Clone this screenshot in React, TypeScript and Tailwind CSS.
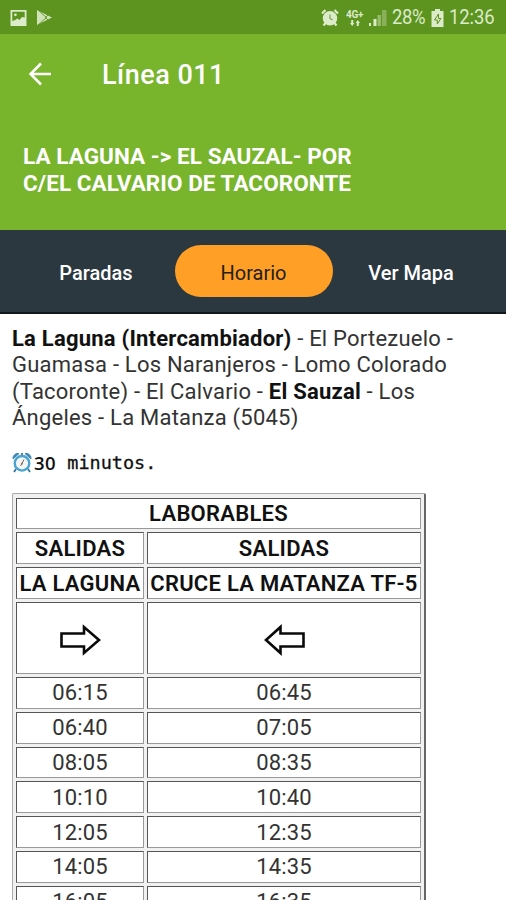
import clsx from "clsx";

/* TIMETABLE DATA */
const times = [
  ["06:15", "06:45"],
  ["06:40", "07:05"],
  ["08:05", "08:35"],
  ["10:10", "10:40"],
  ["12:05", "12:35"],
  ["14:05", "14:35"],
  ["16:05", "16:35"],
];

function StatusBar() {
  return (
    <div className="flex h-[34px] shrink-0 items-center bg-[#5d931f] pl-2.5 pr-[10px] pt-px text-[#dcebc9]">

      {/* NOTIFICATIONS */}
      <svg width="17" height="16" viewBox="0 0 17 16">
        <path
          fillRule="evenodd"
          fill="currentColor"
          d="M.5 0h16v16H.5zM2.300 1.800v9.200l3-1 2-1.500 2.200 1.500 2.500-3 2.700.5V1.800z"
        />
        <circle cx="5.400" cy="4.800" r="1.400" fill="currentColor" />
      </svg>
      <svg width="17" height="17" viewBox="0 0 17 17" className="ml-[9px]">
        <path d="M1 1v15L16 8.500z" fill="currentColor" opacity=".9" />
        <path d="M2 1l8.500 7.500L2 16M12.500 5.500l-3 3 3 3" fill="none" stroke="#5d931f" strokeWidth=".9" />
      </svg>

      {/* SYSTEM ICONS */}
      <div className="ml-auto flex items-center">
        <svg width="18" height="18" viewBox="0 0 18 18">
          <circle cx="9" cy="9.300" r="7.200" fill="currentColor" />
          <path d="M1 4.500L4.500 1M17 4.500L13.500 1M4.500 14l-2 2.500M13.500 14l2 2.500" stroke="currentColor" strokeWidth="2.200" />
          <path d="M9 5.500v4l2.600 1.600" fill="none" stroke="#7da653" strokeWidth="1.200" />
        </svg>
        <div className="ml-[7px] flex w-[17px] flex-col items-center">
          <span className="font-[Roboto] text-[10px] leading-[9px] font-bold tracking-[-0.3px]">4G+</span>
          <svg width="10" height="6" viewBox="0 0 10 6" className="mt-px">
            <path d="M0 3l2.200 3L4.400 3H3.200V0H1.200v3zM5.600 3l2.200-3L10 3H8.800v3H6.800V3z" fill="currentColor" />
          </svg>
        </div>
        <svg width="18" height="17" viewBox="0 0 18 17" className="ml-1.5">
          <path d="M0 14h2v3H0zM4.500 10h3v7h-3z" fill="currentColor" />
          <path d="M8.500 6H12v11H8.500z" fill="currentColor" opacity=".45" />
          <path d="M13 1h4.500v16H13z" fill="currentColor" opacity=".35" />
        </svg>
        <span className="ml-[5px] w-[35px] origin-left scale-y-110 font-[Roboto] text-[18.500px] leading-none tracking-[-0.4px]">28%</span>
        <svg width="13" height="18" viewBox="0 0 13 18" className="ml-1">
          <path d="M4 0h5v2h3.500v16H.5V2H4z" fill="currentColor" />
          <path d="M7.500 5L3.500 11h2.800v4l3.600-5.500H7.500z" fill="none" stroke="#5d931f" />
        </svg>
        <span className="ml-[5px] w-[47px] origin-left scale-y-110 font-[Roboto] text-[18.500px] leading-none tracking-[-0.1px]">12:36</span>
      </div>
    </div>
  );
}

function AlarmIcon() {
  return (
    <svg width="20" height="21" viewBox="0 0 20 21">
      <path d="M1 7a5 5 0 0 1 6-5.500zM19 7a5 5 0 0 0-6-5.500z" fill="#3a86b4" stroke="#3a86b4" />
      <path d="M4 17l-2 3M16 17l2 3M10 1v3" stroke="#34769b" strokeWidth="1.800" />
      <circle cx="10" cy="11.300" r="7.300" fill="#f4f6f6" stroke="#4ba3d0" strokeWidth="2.400" />
      <path d="M10 11.500l2-4M10 11.500l-1.500 2.300" stroke="#666" />
      <circle cx="9.800" cy="11.800" r="1" fill="#a36b4a" />
    </svg>
  );
}

function ArrowRight() {
  return (
    <svg width="42" height="32" viewBox="0 0 42 32">
      <path d="M2.500 9.500H25V3L40 16 25 29V22.500H2.500z" fill="#fff" stroke="#0a0a0a" strokeWidth="2.600" />
    </svg>
  );
}

function ArrowLeft() {
  return (
    <svg width="42" height="32" viewBox="0 0 42 32">
      <path d="M40.500 9.500H17.500V3L3 16 17.500 29V22.500H40.500z" fill="#fff" stroke="#0a0a0a" strokeWidth="2.600" />
    </svg>
  );
}

function Cell({ children, className }: { children: React.ReactNode; className?: string }) {
  return (
    <div
      className={clsx(
        "flex items-center justify-center border border-t-[#555] border-l-[#555] border-r-[#999] border-b-[#999] bg-white whitespace-nowrap",
        className
      )}
    >
      {children}
    </div>
  );
}

export default function App() {
  return (
    <div className="flex h-[900px] w-[506px] flex-col overflow-hidden bg-white font-[Roboto,sans-serif]">

      <StatusBar />

      {/* HEADER */}
      <header className="h-[196px] shrink-0 bg-[#78b52c] text-white">
        <div className="flex h-20 items-center pl-7">
          <svg width="24" height="24" viewBox="0 0 24 24" fill="none" stroke="currentColor" strokeWidth="2.500">
            <path d="M23 12H2.500M13 1.500L2.500 12 13 22.500" />
          </svg>
          <h1 className="ml-[50px] pt-0.5 text-[27px] leading-none font-medium tracking-[0.5px]">Línea 011</h1>
        </div>
        <p className="pt-[29px] pl-[23px] text-[22.500px] leading-[26.500px] font-bold tracking-[0.050px]">
          LA LAGUNA -&gt; EL SAUZAL- POR
          <br />
          C/EL CALVARIO DE TACORONTE
        </p>
      </header>

      {/* TABS */}
      <nav className="flex h-[84px] shrink-0 items-center border-b-2 border-[#10181c] bg-[#2b383f] pl-4 text-[20px] font-medium text-white">
        <button className="h-[52px] w-[159px] pt-1 pl-px">Paradas</button>
        <button className="h-[52px] w-[158px] rounded-full bg-[#ff9f26] pt-1 pr-px font-normal text-[#24201a]">Horario</button>
        <button className="h-[52px] w-[157px] pt-1 pr-px">Ver Mapa</button>
      </nav>

      <main className="pt-3 pl-3 text-[22px] text-[#333]">

        {/* ROUTE */}
        <p className="leading-[26.400px] tracking-[0.220px] whitespace-nowrap">
          <b className="text-[#111]">La Laguna (Intercambiador)</b> - El Portezuelo -
          <br />
          Guamasa - Los Naranjeros - Lomo Colorado
          <br />
          (Tacoronte) - El Calvario - <b className="text-[#111]">El Sauzal</b> - Los
          <br />
          Ángeles - La Matanza (5045)
        </p>

        <p className="mt-[19px] mb-[18px] flex h-6 items-center text-[18.500px] leading-6 text-[#111]">
          <AlarmIcon />
          <span className="ml-[2px] font-['Open_Sans'] font-semibold tracking-[0.500px]">30</span>
          <span className="font-['DejaVu_Sans_Mono'] whitespace-pre [-webkit-text-stroke:0.3px_#111]"> minutos.</span>
        </p>

        {/* TIMETABLE */}
        <div className="grid w-[414px] grid-cols-[128px_274px] grid-rows-[31.800px_31.800px_31.800px_72px] auto-rows-[31.800px] gap-[3px] rounded-t-xs border border-t-[#aaa] border-r-2 border-r-[#666] border-l-[#aaa] bg-[#f1f1f1] px-[3px] pt-1">
          <Cell className="col-span-2 font-semibold tracking-[0.250px] text-[#111]">LABORABLES</Cell>
          <Cell className="font-semibold tracking-[0.250px] text-[#111]">SALIDAS</Cell>
          <Cell className="font-semibold tracking-[0.250px] text-[#111]">SALIDAS</Cell>
          <Cell className="font-semibold tracking-[0.250px] text-[#111]">LA LAGUNA</Cell>
          <Cell className="font-semibold tracking-[0.250px] text-[#111]">CRUCE LA MATANZA TF-5</Cell>
          <Cell className="pt-1"><ArrowRight /></Cell>
          <Cell className="pt-1"><ArrowLeft /></Cell>
          {times.map(([out, back], i) => (
            <div key={i} className="contents tracking-[0.150px]">
              <Cell>{out}</Cell>
              <Cell>{back}</Cell>
            </div>
          ))}
        </div>
      </main>
    </div>
  );
}
